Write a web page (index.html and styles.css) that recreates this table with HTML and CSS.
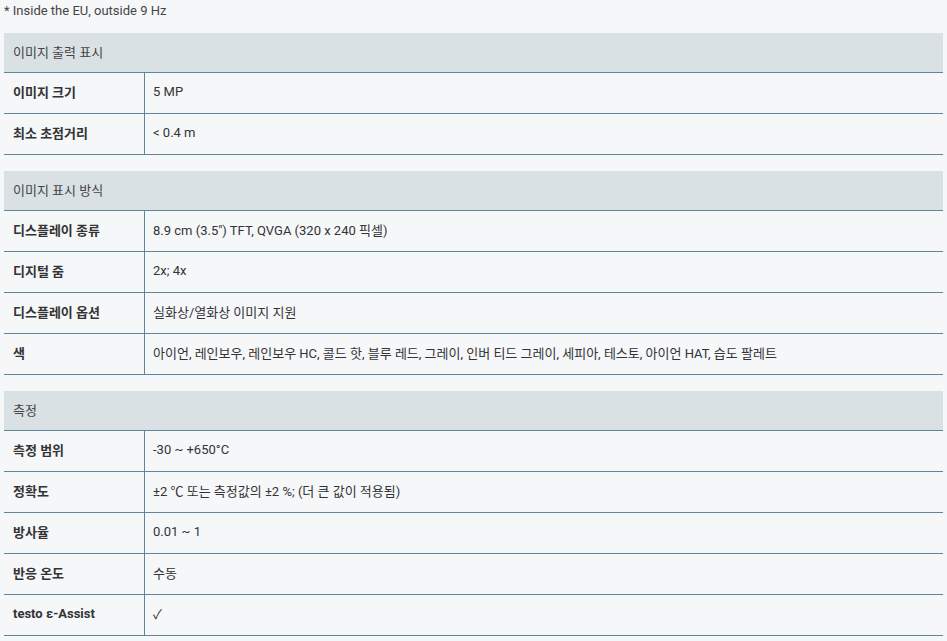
FILE: index.html
```html
<!DOCTYPE html>
<html lang="ko">
<head>
    <meta charset="UTF-8">
    <meta name="viewport" content="width=device-width, initial-scale=1.0">
    <title>기술 사양</title>
    <link rel="stylesheet" href="styles.css">
</head>
<body>
    <div class="container">
        <p class="note">* Inside the EU, outside 9 Hz</p>

        <table class="spec">
            <tr class="head"><th colspan="2">이미지 출력 표시</th></tr>
            <tr><td class="label">이미지 크기</td><td>5 MP</td></tr>
            <tr><td class="label">최소 초점거리</td><td>&lt; 0.4 m</td></tr>
        </table>

        <table class="spec">
            <tr class="head"><th colspan="2">이미지 표시 방식</th></tr>
            <tr><td class="label">디스플레이 종류</td><td>8.9 cm (3.5") TFT, QVGA (320 x 240 픽셀)</td></tr>
            <tr><td class="label">디지털 줌</td><td>2x; 4x</td></tr>
            <tr><td class="label">디스플레이 옵션</td><td>실화상/열화상 이미지 지원</td></tr>
            <tr><td class="label">색</td><td>아이언, 레인보우, 레인보우 HC, 콜드 핫, 블루 레드, 그레이, 인버 티드 그레이, 세피아, 테스토, 아이언 HAT, 습도 팔레트</td></tr>
        </table>

        <table class="spec">
            <tr class="head"><th colspan="2">측정</th></tr>
            <tr><td class="label">측정 범위</td><td>-30 ~ +650°C</td></tr>
            <tr><td class="label">정확도</td><td>±2 ℃ 또는 측정값의 ±2 %; (더 큰 값이 적용됨)</td></tr>
            <tr><td class="label">방사율</td><td>0.01 ~ 1</td></tr>
            <tr><td class="label">반응 온도</td><td>수동</td></tr>
            <tr><td class="label">testo ε-Assist</td><td>✓</td></tr>
        </table>
    </div>
</body>
</html>
```

FILE: styles.css
```css
html, body {
    background-color: #f5f7f9;
}
body {
    margin: 0;
    font-family: Roboto, "Noto Sans CJK KR", sans-serif;
    font-size: 13px;
    color: #333;
}
.container {
    padding: 0 4px;
}
.note {
    margin: 0;
    padding-top: 3px;
    height: 30px;
    line-height: 15px;
    color: #444;
}
.spec {
    width: 100%;
    border-collapse: collapse;
    margin-bottom: 16px;
}
.spec th {
    background-color: #d9e1e4;
    text-align: left;
    font-weight: normal;
    height: 36px;
    padding: 0 9px 3px;
    border-bottom: 1px solid #5e8699;
    color: #444;
}
.spec td {
    height: 37px;
    padding: 0 8px 3px;
    border-bottom: 1px solid #5e8699;
    vertical-align: middle;
}
.spec td.label {
    width: 123px;
    padding-left: 9px;
    font-weight: bold;
    border-right: 1px solid #5e8699;
}
```
